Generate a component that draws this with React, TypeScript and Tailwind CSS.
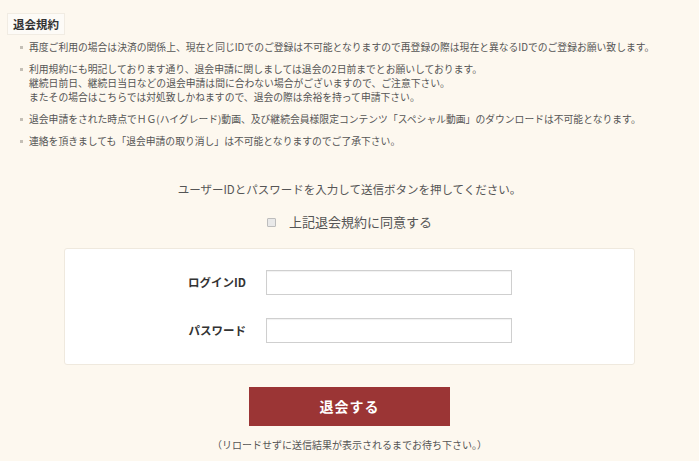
import React from "react";

const font = { fontFamily: '"Noto Sans CJK JP", "Noto Sans", sans-serif' };

const items: string[][] = [
  ["再度ご利用の場合は決済の関係上、現在と同じIDでのご登録は不可能となりますので再登録の際は現在と異なるIDでのご登録お願い致します。"],
  [
    "利用規約にも明記しております通り、退会申請に関しましては退会の2日前までとお願いしております。",
    "継続日前日、継続日当日などの退会申請は間に合わない場合がございますので、ご注意下さい。",
    "またその場合はこちらでは対処致しかねますので、退会の際は余裕を持って申請下さい。",
  ],
  ["退会申請をされた時点でＨＧ(ハイグレード)動画、及び継続会員様限定コンテンツ「スペシャル動画」のダウンロードは不可能となります。"],
  ["連絡を頂きましても「退会申請の取り消し」は不可能となりますのでご了承下さい。"],
];

export default function App() {
  return (
    <div className="w-full min-h-[461px] bg-[#fdf8ef] text-[#555]" style={font}>
      <div className="px-[7px] pt-[10px]">
        <div className="inline-block bg-[#fdfbf7] border border-[#f1ece3] px-[5px] h-[22px] leading-[21px] text-[11.5px] font-bold text-[#333]">
          退会規約
        </div>
        <ul className="mt-[5px] pl-[13px] flex flex-col gap-[8px]">
          {items.map((lines, i) => (
            <li key={i} className="flex items-start">
              <span className="w-[3px] h-[3px] bg-[#c4bfb6] mt-[6px] mr-[6px] shrink-0" />
              <div className="text-[9.8px] leading-[14px] text-[#555] whitespace-nowrap">
                {lines.map((l, j) => (
                  <div key={j}>{l}</div>
                ))}
              </div>
            </li>
          ))}
        </ul>
      </div>

      <p className="mt-[33px] text-center text-[11.5px] leading-[16px] text-[#555]">
        ユーザーIDとパスワードを入力して送信ボタンを押してください。
      </p>

      <div className="mt-[16px] flex items-center justify-center">
        <span className="w-[9px] h-[9px] border border-[#bdbdbd] bg-[#e9e9e9] rounded-[1px] mr-[13px]" />
        <span className="text-[13px] leading-[18px] text-[#555]">上記退会規約に同意する</span>
      </div>

      <div className="mx-[64px] mt-[17px] bg-white border border-[#efe9de] rounded-[3px] py-[21px] flex flex-col gap-[23px]">
        <div className="flex items-center">
          <div className="w-[181px] text-right text-[11.5px] font-bold text-[#333]">ログインID</div>
          <div className="ml-[20px] w-[246px] h-[25px] border border-[#cfcfcf] bg-white shadow-[inset_0_1px_1px_rgba(0,0,0,0.06)]" />
        </div>
        <div className="flex items-center">
          <div className="w-[181px] text-right text-[11.5px] font-bold text-[#333]">パスワード</div>
          <div className="ml-[20px] w-[246px] h-[25px] border border-[#cfcfcf] bg-white shadow-[inset_0_1px_1px_rgba(0,0,0,0.06)]" />
        </div>
      </div>

      <div className="mt-[22px] flex justify-center">
        <button className="w-[201px] h-[39px] bg-[#9b3535] text-white text-[14px] font-bold tracking-[1px]">
          退会する
        </button>
      </div>

      <p className="mt-[12px] text-center text-[10px] leading-[14px] text-[#555]">
        （リロードせずに送信結果が表示されるまでお待ち下さい。）
      </p>
    </div>
  );
}
